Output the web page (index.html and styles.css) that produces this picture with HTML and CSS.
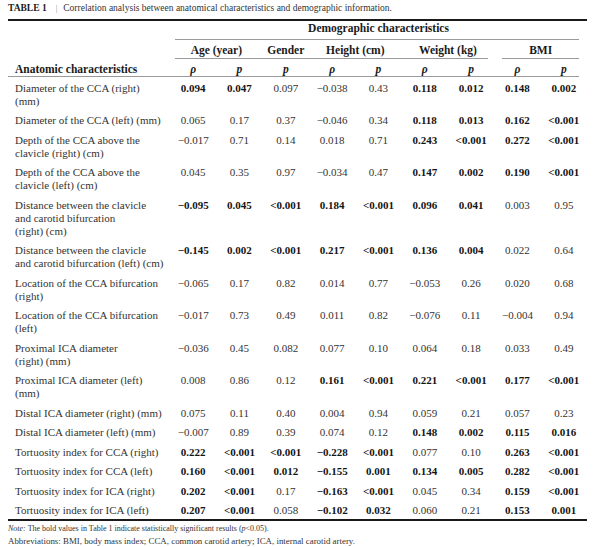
FILE: index.html
```html
<!DOCTYPE html>
<html>
<head>
<meta charset="utf-8">
<link rel="stylesheet" href="styles.css">
</head>
<body>
<div class="page">
  <div class="caption"><span class="tag">TABLE 1</span><span class="bar">|</span><span class="cap-text">Correlation analysis between anatomical characteristics and demographic information.</span></div>
  <div class="rules">
    <table class="tbl">
      <colgroup>
        <col class="c-label">
        <col><col><col><col><col><col><col><col><col>
      </colgroup>
      <thead>
        <tr class="h1">
          <th></th>
          <th colspan="9" class="ln ln-demo">Demographic characteristics</th>
        </tr>
        <tr class="h2">
          <th></th>
          <th colspan="2" class="ln ln-age">Age (year)</th>
          <th class="ln">Gender</th>
          <th colspan="2" class="ln">Height (cm)</th>
          <th colspan="2" class="ln ln-weight">Weight (kg)</th>
          <th colspan="2" class="ln ln-bmi">BMI</th>
        </tr>
        <tr class="h3">
          <th class="lbl ln">Anatomic characteristics</th>
          <th class="ln sym">ρ</th><th class="ln sym">p</th>
          <th class="ln sym">p</th>
          <th class="ln sym">ρ</th><th class="ln sym">p</th>
          <th class="ln sym">ρ</th><th class="ln sym">p</th>
          <th class="ln sym">ρ</th><th class="ln ln-last sym">p</th>
        </tr>
      </thead>
      <tbody>
        <tr><td>Diameter of the CCA (right)<br>(mm)</td><td class="b">0.094</td><td class="b">0.047</td><td>0.097</td><td>−0.038</td><td>0.43</td><td class="b">0.118</td><td class="b">0.012</td><td class="b">0.148</td><td class="b">0.002</td></tr>
        <tr><td>Diameter of the CCA (left) (mm)</td><td>0.065</td><td>0.17</td><td>0.37</td><td>−0.046</td><td>0.34</td><td class="b">0.118</td><td class="b">0.013</td><td class="b">0.162</td><td class="b">&lt;0.001</td></tr>
        <tr><td>Depth of the CCA above the<br>clavicle (right) (cm)</td><td>−0.017</td><td>0.71</td><td>0.14</td><td>0.018</td><td>0.71</td><td class="b">0.243</td><td class="b">&lt;0.001</td><td class="b">0.272</td><td class="b">&lt;0.001</td></tr>
        <tr><td>Depth of the CCA above the<br>clavicle (left) (cm)</td><td>0.045</td><td>0.35</td><td>0.97</td><td>−0.034</td><td>0.47</td><td class="b">0.147</td><td class="b">0.002</td><td class="b">0.190</td><td class="b">&lt;0.001</td></tr>
        <tr><td>Distance between the clavicle<br>and carotid bifurcation<br>(right) (cm)</td><td class="b">−0.095</td><td class="b">0.045</td><td class="b">&lt;0.001</td><td class="b">0.184</td><td class="b">&lt;0.001</td><td class="b">0.096</td><td class="b">0.041</td><td>0.003</td><td>0.95</td></tr>
        <tr><td>Distance between the clavicle<br>and carotid bifurcation (left) (cm)</td><td class="b">−0.145</td><td class="b">0.002</td><td class="b">&lt;0.001</td><td class="b">0.217</td><td class="b">&lt;0.001</td><td class="b">0.136</td><td class="b">0.004</td><td>0.022</td><td>0.64</td></tr>
        <tr><td>Location of the CCA bifurcation<br>(right)</td><td>−0.065</td><td>0.17</td><td>0.82</td><td>0.014</td><td>0.77</td><td>−0.053</td><td>0.26</td><td>0.020</td><td>0.68</td></tr>
        <tr><td>Location of the CCA bifurcation<br>(left)</td><td>−0.017</td><td>0.73</td><td>0.49</td><td>0.011</td><td>0.82</td><td>−0.076</td><td>0.11</td><td>−0.004</td><td>0.94</td></tr>
        <tr><td>Proximal ICA diameter<br>(right) (mm)</td><td>−0.036</td><td>0.45</td><td>0.082</td><td>0.077</td><td>0.10</td><td>0.064</td><td>0.18</td><td>0.033</td><td>0.49</td></tr>
        <tr><td>Proximal ICA diameter (left)<br>(mm)</td><td>0.008</td><td>0.86</td><td>0.12</td><td class="b">0.161</td><td class="b">&lt;0.001</td><td class="b">0.221</td><td class="b">&lt;0.001</td><td class="b">0.177</td><td class="b">&lt;0.001</td></tr>
        <tr><td>Distal ICA diameter (right) (mm)</td><td>0.075</td><td>0.11</td><td>0.40</td><td>0.004</td><td>0.94</td><td>0.059</td><td>0.21</td><td>0.057</td><td>0.23</td></tr>
        <tr><td>Distal ICA diameter (left) (mm)</td><td>−0.007</td><td>0.89</td><td>0.39</td><td>0.074</td><td>0.12</td><td class="b">0.148</td><td class="b">0.002</td><td class="b">0.115</td><td class="b">0.016</td></tr>
        <tr><td>Tortuosity index for CCA (right)</td><td class="b">0.222</td><td class="b">&lt;0.001</td><td class="b">&lt;0.001</td><td class="b">−0.228</td><td class="b">&lt;0.001</td><td>0.077</td><td>0.10</td><td class="b">0.263</td><td class="b">&lt;0.001</td></tr>
        <tr><td>Tortuosity index for CCA (left)</td><td class="b">0.160</td><td class="b">&lt;0.001</td><td class="b">0.012</td><td class="b">−0.155</td><td class="b">0.001</td><td class="b">0.134</td><td class="b">0.005</td><td class="b">0.282</td><td class="b">&lt;0.001</td></tr>
        <tr><td>Tortuosity index for ICA (right)</td><td class="b">0.202</td><td class="b">&lt;0.001</td><td>0.17</td><td class="b">−0.163</td><td class="b">&lt;0.001</td><td>0.045</td><td>0.34</td><td class="b">0.159</td><td class="b">&lt;0.001</td></tr>
        <tr><td>Tortuosity index for ICA (left)</td><td class="b">0.207</td><td class="b">&lt;0.001</td><td>0.058</td><td class="b">−0.102</td><td class="b">0.032</td><td>0.060</td><td>0.21</td><td class="b">0.153</td><td class="b">0.001</td></tr>
      </tbody>
    </table>
  </div>
  <div class="notes">
    <div><i>Note:</i> The bold values in Table 1 indicate statistically significant results (<i>p</i>&lt;0.05).</div>
    <div class="abbr">Abbreviations: BMI, body mass index; CCA, common carotid artery; ICA, internal carotid artery.</div>
  </div>
</div>
</body>
</html>
```
FILE: styles.css
```css
html, body {
  margin: 0;
  padding: 0;
  background: #fff;
}
body {
  font-family: "Liberation Serif", "Times New Roman", serif;
  color: #2a2a2a;
}
.page {
  width: 579px;
  padding: 3px 0 0 8px;
}
.caption {
  font-size: 9.5px;
  line-height: 11px;
  color: #333;
  white-space: nowrap;
}
.caption .tag {
  font-weight: bold;
  color: #1a1a1a;
}
.caption .bar {
  display: inline-block;
  margin: 0 6px 0 9px;
  color: #888;
  font-size: 8px;
}
.rules {
  margin-top: 5px;
  border-top: 2px solid #1a1a1a;
  border-bottom: 2px solid #1a1a1a;
}
.tbl {
  width: 579px;
  table-layout: fixed;
  border-collapse: collapse;
  border-spacing: 0;
}
.c-label {
  width: 162px;
}
.tbl th {
  font-weight: bold;
  font-size: 11.5px;
  line-height: 15px;
  color: #1a1a1a;
  text-align: center;
  vertical-align: top;
  padding: 0;
  white-space: nowrap;
}
.tbl .ln {
  background: linear-gradient(#9a9a9a, #9a9a9a) left bottom / 100% 1px no-repeat;
}
.tbl .ln-demo {
  background-position: 5px bottom;
  background-size: calc(100% - 13px) 1px;
}
.tbl .ln-age {
  background-position: 5px bottom;
  background-size: calc(100% - 5px) 1px;
}
.tbl .ln-weight {
  background-size: calc(100% - 6px) 1px;
}
.tbl .ln-bmi {
  background-position: 8px bottom;
  background-size: calc(100% - 16px) 1px;
}
.tbl .ln-last {
  background-size: calc(100% - 8px) 1px;
}
.h1 th {
  padding: 0 0 4px;
}
.h2 th {
  padding: 2.5px 0 1.5px;
}
.h3 th {
  padding: 2.5px 0 0.5px;
}
.tbl th.lbl {
  text-align: left;
  padding-left: 7px;
}
.tbl th.sym {
  font-style: italic;
}
.tbl td {
  font-size: 11px;
  line-height: 13px;
  padding: 4.5px 0 2px;
  text-align: center;
  vertical-align: top;
  white-space: nowrap;
  color: #333;
}
.tbl td:first-child {
  text-align: left;
  padding-left: 7px;
}
.tbl td.b {
  font-weight: bold;
  color: #141414;
}
.notes {
  margin-top: 2px;
  font-size: 8px;
  line-height: 12px;
  color: #333;
  white-space: nowrap;
}
.notes .abbr {
  font-size: 8.9px;
}
```
